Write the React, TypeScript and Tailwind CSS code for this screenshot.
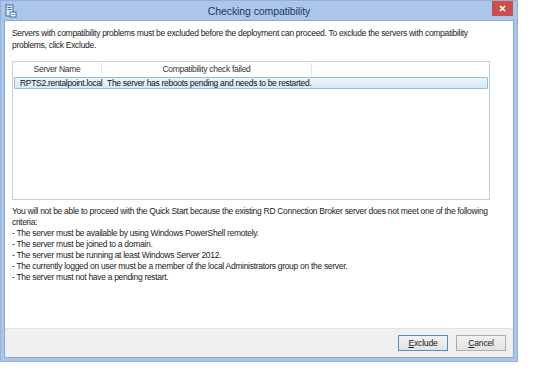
import React from "react";

const font = { fontFamily: '"Liberation Sans", Arial, sans-serif' };

function AppIcon() {
  return (
    <svg width="12" height="14" viewBox="0 0 12 14" className="shrink-0">
      <rect x="1" y="1" width="7" height="11" fill="#e8eef7" stroke="#3f6ea8" strokeWidth="1" />
      <rect x="2.5" y="3" width="4" height="1" fill="#3f6ea8" />
      <rect x="2.5" y="5" width="4" height="1" fill="#3f6ea8" />
      <rect x="5" y="8" width="6" height="5" fill="#f4f7fb" stroke="#3f6ea8" strokeWidth="1" />
      <rect x="6.5" y="10" width="3" height="1" fill="#5b8fd0" />
    </svg>
  );
}

function Button({ label, hot, primary }: { label: string; hot: string; primary?: boolean }) {
  const rest = label.slice(1);
  return (
    <button
      className={
        "w-[50px] h-[16px] flex items-center justify-center text-[8.6px] tracking-[-0.2px] leading-none text-[#1a1a1a] bg-gradient-to-b from-[#f2f2f2] to-[#e3e3e3] border " +
        (primary ? "border-[#4f8fc9]" : "border-[#adadad]")
      }
    >
      <span>
        <span className="underline">{hot}</span>
        {rest}
      </span>
    </button>
  );
}

export default function App() {
  const criteria = [
    "- The server must be available by using Windows PowerShell remotely.",
    "- The server must be joined to a domain.",
    "- The server must be running at least Windows Server 2012.",
    "- The currently logged on user must be a member of the local Administrators group on the server.",
    "- The server must not have a pending restart.",
  ];

  return (
    <div className="w-[540px] h-[373px] bg-white overflow-hidden" style={font}>
      <div className="w-[518px] h-[362px] bg-[#abc6ea] border border-[#94b1d9] flex flex-col">
        <div className="relative h-[19px] flex items-center px-[4px]">
          <AppIcon />
          <div className="absolute left-0 right-0 top-[3px] text-center text-[10.5px] tracking-[-0.1px] leading-[14px] text-[#1e3a5c]">
            Checking compatibility
          </div>
          <div className="absolute right-[4px] top-0 w-[21px] h-[15px] bg-[#c9504c] flex items-center justify-center">
            <svg width="7" height="7" viewBox="0 0 7 7">
              <path d="M1 1L6 6M6 1L1 6" stroke="#fff" strokeWidth="1.6" />
            </svg>
          </div>
        </div>

        <div className="flex-1 mx-[3px] mb-[3px] bg-white border border-[#8aa8d2] flex flex-col">
          <div className="flex-1 flex flex-col pl-[7px] pr-[23px] pt-[6px] text-[8.5px] tracking-[-0.3px] text-[#1b1b1b]">
            <p className="leading-[12px]">
              Servers with compatibility problems must be excluded before the deployment can proceed. To exclude the
              servers with compatibility problems, click Exclude.
            </p>

            <div className="mt-[10px] h-[139px] border border-[#c9ced6] flex flex-col">
              <div className="flex h-[15px] items-center text-[#333]">
                <div className="w-[89px] text-center border-r border-[#e3e6ea]">Server Name</div>
                <div className="w-[210px] text-center border-r border-[#e3e6ea]">Compatibility check failed</div>
              </div>
              <div className="mx-[1px] h-[12px] flex items-center border border-[#8ebde8] rounded-[1px] bg-gradient-to-b from-[#eef6fd] to-[#d4e8f8] text-[#111]">
                <div className="w-[88px] pl-[5px]">RPTS2.rentalpoint.local</div>
                <div className="pl-[4px]">The server has reboots pending and needs to be restarted.</div>
              </div>
            </div>

            <div className="mt-[6px] leading-[11px] -mr-[20px]">
              <p>
                You will not be able to proceed with the Quick Start because the existing RD Connection Broker server
                does not meet one of the following criteria:
              </p>
              {criteria.map((c) => (
                <p key={c}>{c}</p>
              ))}
            </div>
          </div>

          <div className="h-[29px] bg-[#f0f0f0] border-t border-[#e2e2e2] flex items-center justify-end gap-[8px] pr-[7px]">
            <Button label="Exclude" hot="E" primary />
            <Button label="Cancel" hot="C" />
          </div>
        </div>
      </div>
    </div>
  );
}
